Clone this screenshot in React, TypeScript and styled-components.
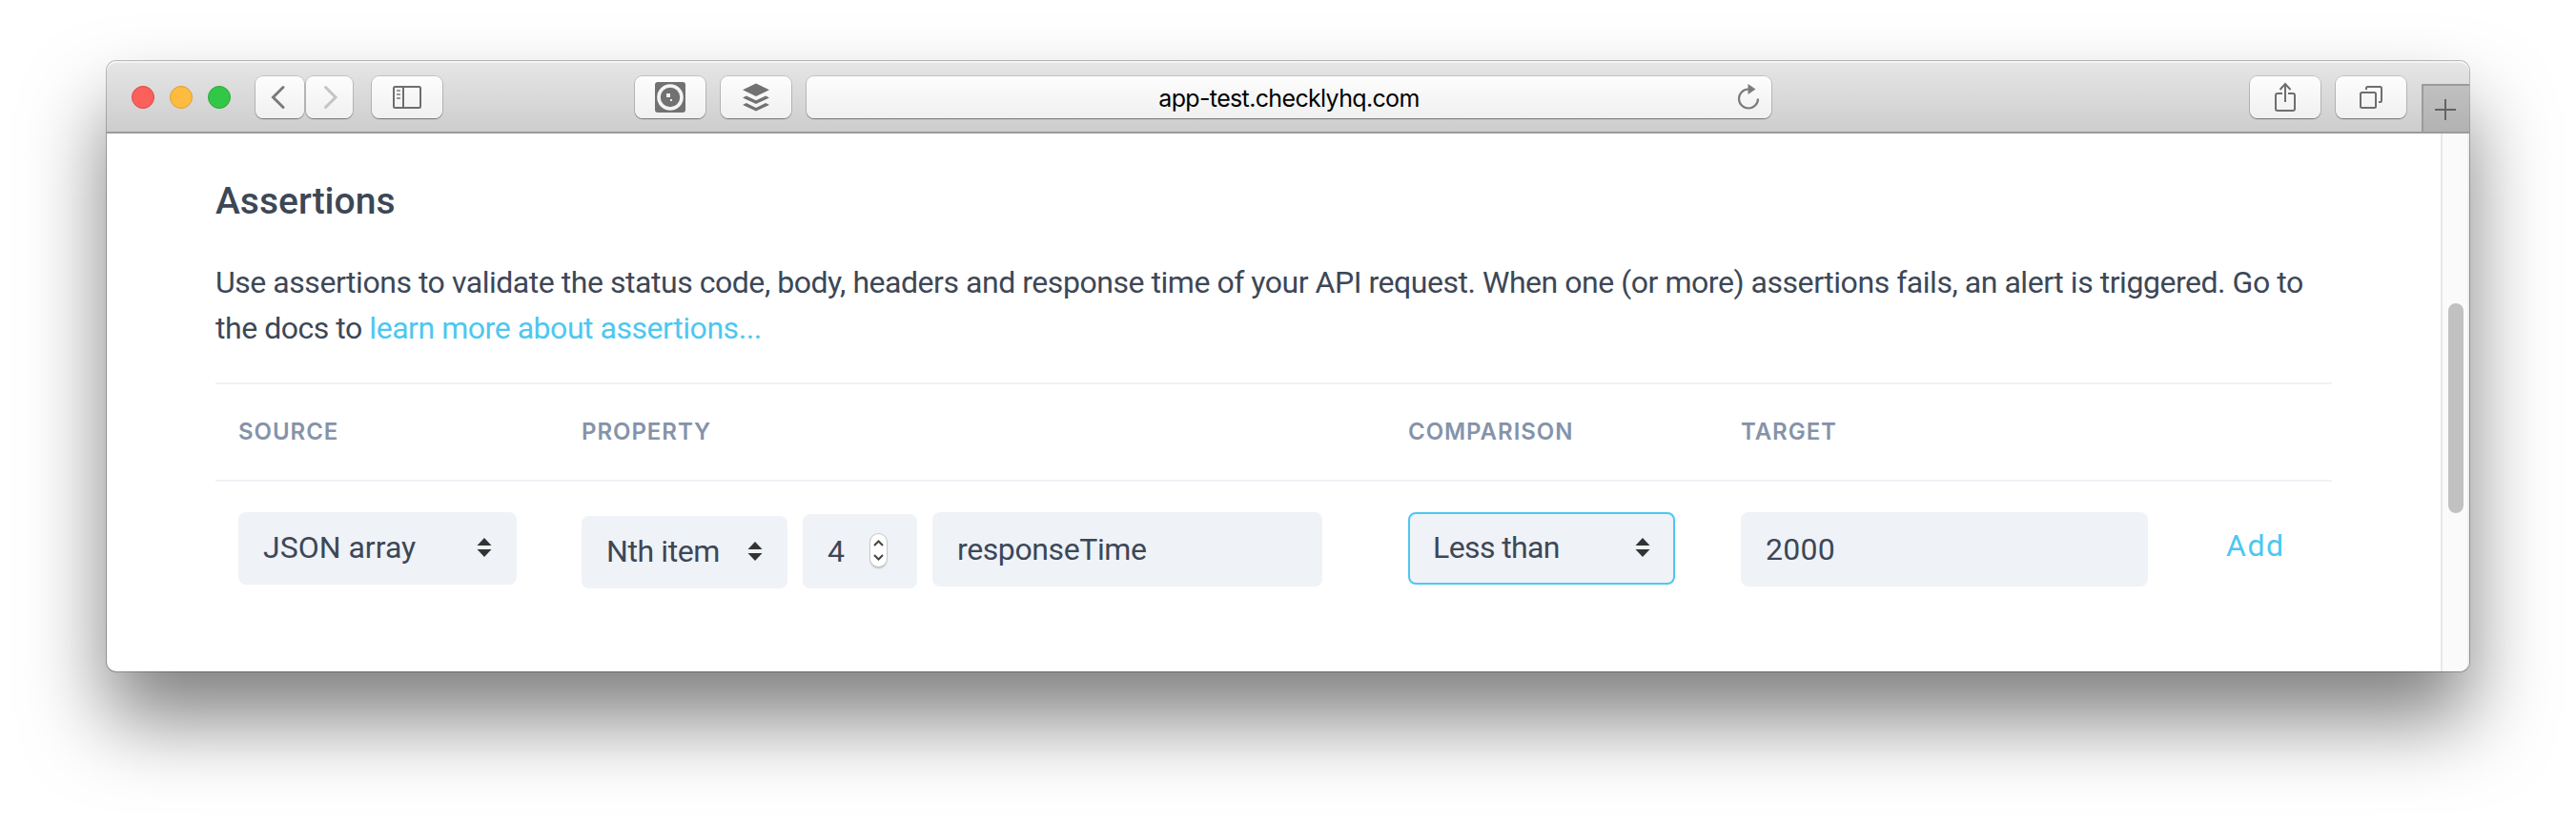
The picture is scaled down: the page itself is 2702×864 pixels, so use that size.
import React from 'react';
import styled, { createGlobalStyle, css } from 'styled-components';

const ink = '#3d4756';
const accent = '#4dc7f0';
const field = '#eff2f7';

const GlobalStyle = createGlobalStyle`
  * { box-sizing: border-box; }
  body { margin: 0; background: #fff; overflow: hidden; }
`;

const Desktop = styled.div`
  height: 864px;
  padding: 64px 112px 160px;
  background: #fff;
  font-family: Roboto, 'Liberation Sans', sans-serif;
  font-weight: 400;
  color: ${ink};
`;

const Window = styled.div`
  height: 640px;
  display: flex;
  flex-direction: column;
  border-radius: 10px;
  background: #fff;
  box-shadow: 0 0 0 1px rgba(0, 0, 0, 0.25), 0 50px 84px rgba(0, 0, 0, 0.5);
`;

const TitleBar = styled.header`
  height: 76px;
  flex: none;
  display: flex;
  justify-content: space-between;
  align-items: flex-start;
  padding-left: 26px;
  border-bottom: 2px solid #9b9b9b;
  border-radius: 10px 10px 0 0;
  background: linear-gradient(#e6e6e6, #cdcdcd);
  box-shadow: inset 0 2px 0 rgba(255, 255, 255, 0.55);
  overflow: hidden;
`;

const BarGroup = styled.div`
  display: flex;
  align-items: flex-start;
  padding-top: 16px;
`;

const Lights = styled.div`
  display: flex;
  gap: 16px;
  margin: 10px 26px 0 0;
`;

const Light = styled.span<{ $fill: string; $edge: string }>`
  width: 24px;
  height: 24px;
  border-radius: 50%;
  background: ${p => p.$fill};
  border: 1px solid ${p => p.$edge};
`;

const raised = css`
  height: 44px;
  border-radius: 8px;
  background: linear-gradient(#fdfdfd, #f0f0f0);
  box-shadow: 0 0 0 1px rgba(0, 0, 0, 0.14), 0 1px 1px rgba(0, 0, 0, 0.35);
`;

const BarButton = styled.button<{ $width?: number; $gap?: number }>`
  ${raised}
  width: ${p => p.$width ?? 74}px;
  margin: 0 ${p => p.$gap ?? 0}px 0 0;
  padding: 0;
  border: 0;
  display: flex;
  align-items: center;
  justify-content: center;
`;

const AddressBar = styled.div`
  ${raised}
  width: 1012px;
  display: grid;
  grid-template-columns: 49px 1fr 49px;
  align-items: center;
  justify-items: center;
`;

const Address = styled.span`
  grid-column: 2;
  padding-top: 2px;
  font: 400 25px/42px Inter, sans-serif;
  letter-spacing: -0.65px;
  color: #000;
`;

const NewTab = styled.button`
  width: 50px;
  height: 50px;
  margin: 8px 0 0 16px;
  padding: 2px 2px 0 0;
  border: solid #9b9b9b;
  border-width: 2px 0 0 2px;
  background: linear-gradient(#c0c0c0, #b2b2b2);
  display: flex;
  align-items: center;
  justify-content: center;
`;

const Viewport = styled.div`
  flex: 1;
  display: flex;
`;

const Content = styled.main`
  flex: 1;
  padding: 48px 114px 0;
`;

const Heading = styled.h2`
  margin: 0 0 36px;
  font-weight: 500;
  font-size: 39px;
  line-height: 47px;
  padding-bottom: 1px;
`;

const Intro = styled.p`
  margin: 0 0 33px;
  width: 2205px;
  font-size: 32px;
  line-height: 48px;
  letter-spacing: -0.46px;
`;

const DocsLink = styled.a`
  color: ${accent};
`;

const Table = styled.section`
  border-top: 2px solid ${field};
`;

const columns = css`
  display: grid;
  grid-template-columns: 360px 867px 349px 475px 169px;
`;

const HeadRow = styled.div`
  ${columns}
  height: 102px;
  border-bottom: 2px solid ${field};
`;

const HeadCell = styled.span`
  padding-left: 24px;
  font: 600 24px/100px Inter, sans-serif;
  letter-spacing: 0.95px;
  color: #8593a9;
`;

const BodyRow = styled.div`
  ${columns}
  padding-top: 32px;
`;

const Cell = styled.div`
  padding-left: 24px;
  display: flex;
  align-items: flex-start;
`;

const PropertyCell = styled(Cell)`
  align-items: flex-end;
  height: 80px;
  gap: 16px;
`;

const box = css<{ $width: number; $track?: number }>`
  width: ${p => p.$width}px;
  display: flex;
  align-items: center;
  justify-content: space-between;
  border-radius: 8px;
  background: ${field};
  font-size: 32px;
  letter-spacing: ${p => p.$track ?? 0}px;
`;

const SelectBox = styled.div<{ $width: number; $track?: number; $focused?: boolean }>`
  ${box}
  height: 76px;
  padding: 0 24px 2px;
  border: 2px solid ${p => (p.$focused ? accent : field)};
`;

const InputBox = styled.div<{ $width: number; $track?: number; $raise?: number }>`
  ${box}
  height: 78px;
  padding: 0 26px;
  margin-bottom: ${p => p.$raise ?? 0}px;
`;

const Stepper = styled.div`
  width: 17px;
  height: 34px;
  margin: 0 6px 2px 0;
  border-radius: 9px;
  background: #fff;
  box-shadow: 0 0 0 1px #c9c9cc, 0 2px 2px rgba(0, 0, 0, 0.25);
  display: flex;
  align-items: center;
  justify-content: center;
`;

const AddCell = styled.div`
  padding: 11px 0 0 58px;
  font-size: 32px;
  line-height: 48px;
  letter-spacing: 1.6px;
  color: ${accent};
`;

const ScrollTrack = styled.aside`
  width: 30px;
  padding: 178px 0 0 6px;
  border-left: 2px solid #e7e7e7;
  border-right: 2px solid #efefef;
  border-radius: 0 0 10px 0;
  background: #fafafa;
`;

const ScrollThumb = styled.div`
  width: 16px;
  height: 220px;
  border-radius: 8px;
  background: #c1c1c1;
`;

const Chevron = ({ right }: { right?: boolean }) => (
  <svg width="20" height="26" viewBox={right ? '-3 0 20 26' : '0 0 20 26'} fill="none" stroke={right ? '#c4c4c4' : '#7a7a7a'} strokeWidth="3" strokeLinecap="round">
    <path d={right ? 'M2.5 2.5 13 13 2.5 23.5' : 'M13 2.5 2.5 13 13 23.5'} />
  </svg>
);

const SidebarIcon = () => (
  <svg width="30" height="24" viewBox="0 0 30 24" fill="none" stroke="#6e6e6e" strokeWidth="2">
    <rect x="1" y="1" width="28" height="22" rx="1.5" />
    <path d="M11 1v22" />
    <path d="M4 5h4M4 9h4M4 13h4" stroke="#9a9a9a" />
  </svg>
);

const LensIcon = () => (
  <svg width="32" height="32" viewBox="0 0 32 32">
    <rect width="32" height="32" rx="3" fill="#717171" />
    <circle cx="16" cy="16" r="12" fill="none" stroke="#f4f4f4" strokeWidth="3.6" />
    <rect x="12" y="12" width="4" height="4" fill="#f0f0f0" />
    <rect x="16" y="18" width="2" height="2" fill="#f0f0f0" />
  </svg>
);

const StackIcon = () => (
  <svg width="28" height="30" viewBox="0 0 28 30" fill="#717171">
    <path d="M14 .5 28 7.2 14 14 0 7.2z" />
    <path d="M0 15.4 3.8 13.4 14 18.3 24.2 13.4 28 15.4 14 22z" />
    <path d="M0 23 3.8 21 14 25.9 24.2 21 28 23 14 29.6z" />
  </svg>
);

const ReloadIcon = () => (
  <svg width="24" height="28" viewBox="0 0 24 28">
    <path d="M12 5.5A10 10 0 1 0 22 15.5" fill="none" stroke="#7b7b7b" strokeWidth="2.2" />
    <path d="M11.5 0 19.5 5.5 11.5 11z" fill="#7b7b7b" />
  </svg>
);

const ShareIcon = () => (
  <svg width="22" height="32" viewBox="0 0 22 32" fill="none" stroke="#6e6e6e" strokeWidth="2">
    <path d="M8 12H3Q1 12 1 14V28Q1 30 3 30H19Q21 30 21 28V14Q21 12 19 12H14" />
    <path d="M11 21V2M5.5 8 11 2 16.5 8" />
  </svg>
);

const TabsIcon = () => (
  <svg width="24" height="24" viewBox="0 0 24 24" fill="none" stroke="#6e6e6e" strokeWidth="2">
    <rect x="1" y="7" width="16" height="16" rx="1.5" />
    <path d="M7 4V2.5Q7 1 8.5 1H21.5Q23 1 23 2.5V15.5Q23 17 21.5 17H20" />
  </svg>
);

const PlusIcon = () => (
  <svg width="22" height="22" viewBox="0 0 22 22" stroke="#636363" strokeWidth="2">
    <path d="M11 0V22M0 11H22" />
  </svg>
);

const SelectArrows = () => (
  <svg width="16" height="20" viewBox="0 0 16 20" fill="#333">
    <path d="M8 0 15.5 8H.5zM.5 12h15L8 20z" />
  </svg>
);

const StepArrows = () => (
  <svg width="11" height="24" viewBox="0 0 11 24" fill="none" stroke="#444" strokeWidth="2">
    <path d="M1 7 5.5 2.5 10 7M1 17 5.5 21.5 10 17" />
  </svg>
);

export default function App() {
  return (
    <Desktop>
      <GlobalStyle />
      <Window>
        <TitleBar>
          <BarGroup>
            <Lights>
              <Light $fill="#fc605b" $edge="#df4644" />
              <Light $fill="#fdbc40" $edge="#de9f34" />
              <Light $fill="#33c748" $edge="#27aa35" />
            </Lights>
            <BarButton $width={51} $gap={2} aria-label="Back"><Chevron /></BarButton>
            <BarButton $width={49} $gap={20} aria-label="Forward"><Chevron right /></BarButton>
            <BarButton $gap={202} aria-label="Sidebar"><SidebarIcon /></BarButton>
            <BarButton $gap={16} aria-label="Extension"><LensIcon /></BarButton>
            <BarButton $gap={16} aria-label="Stack"><StackIcon /></BarButton>
            <AddressBar>
              <Address>app-test.checklyhq.com</Address>
              <ReloadIcon />
            </AddressBar>
          </BarGroup>
          <BarGroup>
            <BarButton $gap={16} aria-label="Share"><ShareIcon /></BarButton>
            <BarButton aria-label="Tabs"><TabsIcon /></BarButton>
            <NewTab aria-label="New tab"><PlusIcon /></NewTab>
          </BarGroup>
        </TitleBar>
        <Viewport>
          <Content>
            <Heading>Assertions</Heading>
            <Intro>
              Use assertions to validate the status code, body, headers and response time of your API request. When one (or
              more) assertions fails, an alert is triggered. Go to the docs to <DocsLink>learn more about assertions...</DocsLink>
            </Intro>
            <Table>
              <HeadRow>
                <HeadCell>SOURCE</HeadCell>
                <HeadCell>PROPERTY</HeadCell>
                <HeadCell>COMPARISON</HeadCell>
                <HeadCell>TARGET</HeadCell>
              </HeadRow>
              <BodyRow>
                <Cell>
                  <SelectBox $width={292}>JSON array<SelectArrows /></SelectBox>
                </Cell>
                <PropertyCell>
                  <SelectBox $width={216} $track={-0.4}>Nth item<SelectArrows /></SelectBox>
                  <InputBox $width={120}>4<Stepper><StepArrows /></Stepper></InputBox>
                  <InputBox $width={409} $track={-0.4} $raise={2}>responseTime</InputBox>
                </PropertyCell>
                <Cell>
                  <SelectBox $width={280} $track={-0.6} $focused>Less than<SelectArrows /></SelectBox>
                </Cell>
                <Cell>
                  <InputBox $width={427} $track={0.3}>2000</InputBox>
                </Cell>
                <AddCell>Add</AddCell>
              </BodyRow>
            </Table>
          </Content>
          <ScrollTrack><ScrollThumb /></ScrollTrack>
        </Viewport>
      </Window>
    </Desktop>
  );
}
